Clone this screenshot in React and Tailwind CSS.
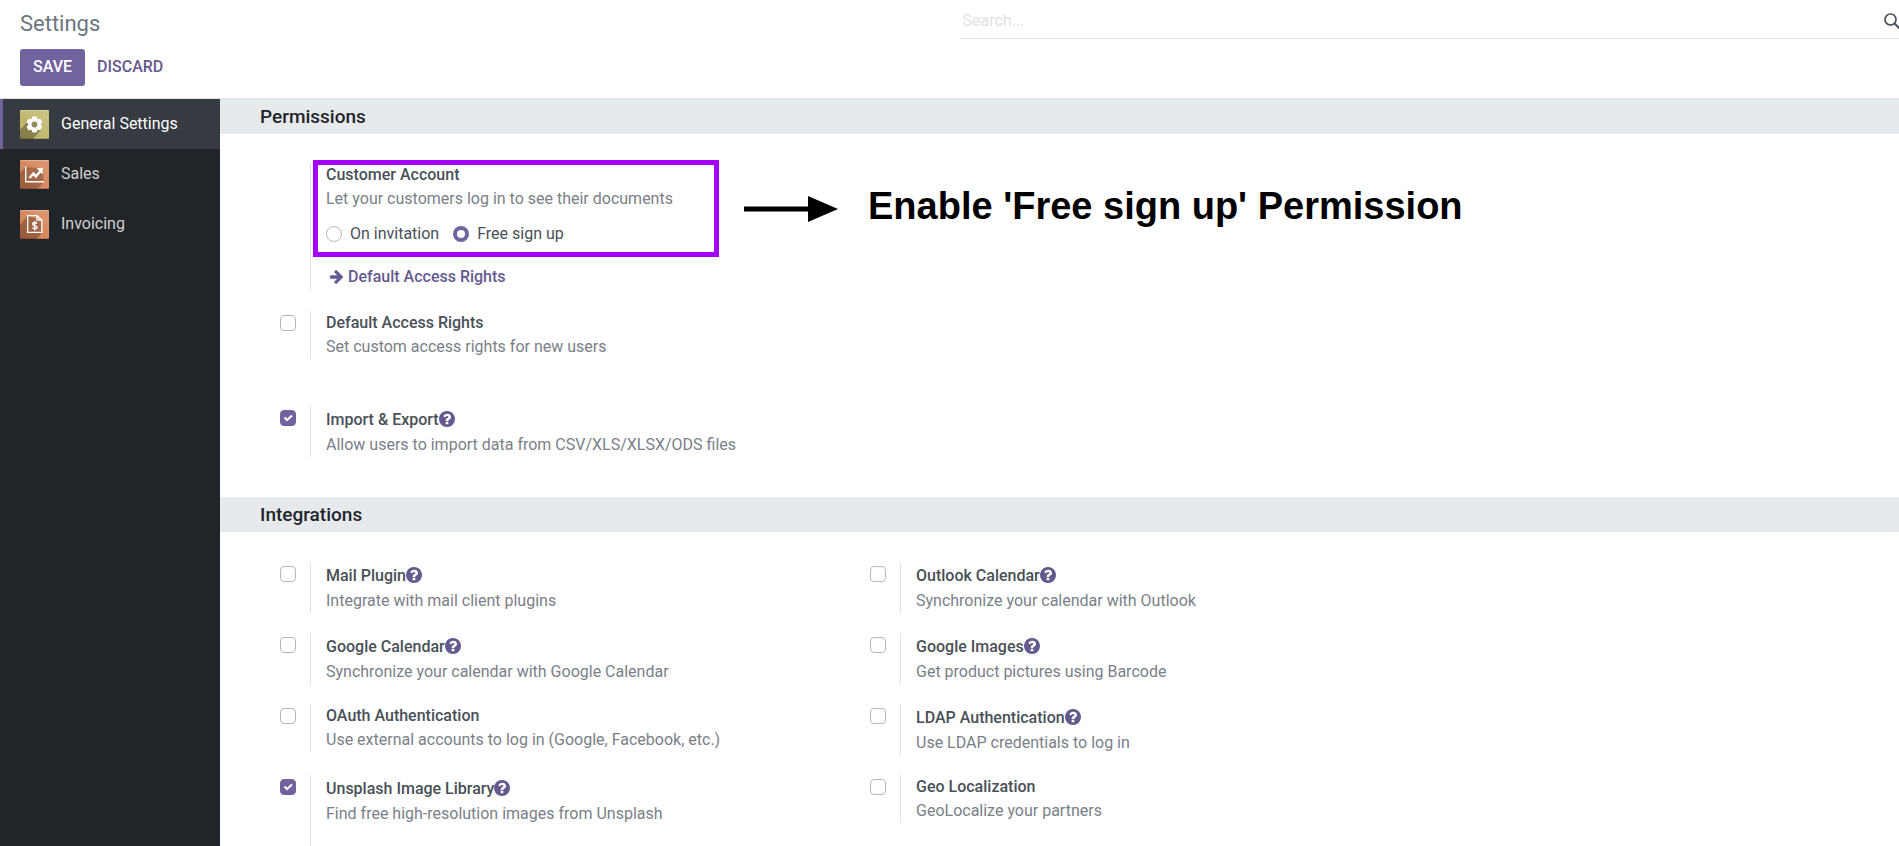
import { useState } from "react";

const permissions = [
  {
    id: "default-access",
    title: "Default Access Rights",
    text: "Set custom access rights for new users",
  },
];

const dataTools = [
  {
    id: "import-export",
    title: "Import & Export",
    text: "Allow users to import data from CSV/XLS/XLSX/ODS files",
    help: true,
    checked: true,
  },
];

const integrations = [
  {
    id: "mail-plugin",
    title: "Mail Plugin",
    text: "Integrate with mail client plugins",
    help: true,
  },
  {
    id: "outlook-calendar",
    title: "Outlook Calendar",
    text: "Synchronize your calendar with Outlook",
    help: true,
  },
  {
    id: "google-calendar",
    title: "Google Calendar",
    text: "Synchronize your calendar with Google Calendar",
    help: true,
  },
  {
    id: "google-images",
    title: "Google Images",
    text: "Get product pictures using Barcode",
    help: true,
  },
  {
    id: "oauth",
    title: "OAuth Authentication",
    text: "Use external accounts to log in (Google, Facebook, etc.)",
  },
  {
    id: "ldap",
    title: "LDAP Authentication",
    text: "Use LDAP credentials to log in",
    help: true,
  },
  {
    id: "unsplash",
    title: "Unsplash Image Library",
    text: "Find free high-resolution images from Unsplash",
    help: true,
    checked: true,
    extra: true,
  },
  {
    id: "geo",
    title: "Geo Localization",
    text: "GeoLocalize your partners",
  },
];

const AppTile = ({ id, from, to, children }) => (
  <svg viewBox="0 0 29 29" className="size-[29px] shrink-0 rounded-[1px]" aria-hidden="true">
    <defs>
      <linearGradient id={id} x1="1" y1="0" x2="0" y2="1">
        <stop offset="0" stopColor={from} />
        <stop offset="1" stopColor={to} />
      </linearGradient>
    </defs>
    <rect width="29" height="29" fill={`url(#${id})`} />
    {children}
    <path d="M0 .5h29" stroke="#fff" strokeOpacity=".3" />
    <path d="M0 28.5h29" stroke="#000" strokeOpacity=".15" />
  </svg>
);

const GearIcon = () => (
  <AppTile id="tile-gear" from="#cdc585" to="#b9ae62">
    <path d="M8 11 0 20v9h13l9-10z" fill="#000" fillOpacity=".28" />
    <g fill="#fff">
      <circle cx="14.5" cy="14.5" r="6.4" />
      <rect x="12" y="6.4" width="5" height="16.2" rx="1.4" />
      <rect x="12" y="6.4" width="5" height="16.2" rx="1.4" transform="rotate(60 14.5 14.5)" />
      <rect x="12" y="6.4" width="5" height="16.2" rx="1.4" transform="rotate(120 14.5 14.5)" />
    </g>
    <circle cx="14.5" cy="14.5" r="2.9" fill="#938b56" />
  </AppTile>
);

const ChartIcon = () => (
  <AppTile id="tile-chart" from="#dd9a74" to="#d1784a">
    <path d="M5.500 7 0 13v16h17.500l6-7L23 8.500z" fill="#000" fillOpacity=".24" />
    <path d="M5.700 6.500V21.700H24" fill="none" stroke="#fff" strokeWidth="1.400" />
    <path d="m9.500 18 4-4.500 2.300 3 4.700-5.500" fill="none" stroke="#fff" strokeWidth="2.400" />
    <path d="m16.500 8.300 6.500-.6-.5 6.500z" fill="#fff" />
  </AppTile>
);

const InvoiceIcon = () => (
  <AppTile id="tile-invoice" from="#dd9a74" to="#d1784a">
    <path d="M7.500 6 0 14.500V29h16.500l5.500-6.500V10z" fill="#000" fillOpacity=".26" />
    <path
      d="M7.700 5.700h9.300l4.800 4.300v12.300H7.700zM17 5.700V10h4.800"
      fill="none"
      stroke="#fff"
      strokeWidth="1.300"
    />
    <path
      d="M17 13.500c-.6-.8-1.400-1-2.300-1-1.200 0-2.100.6-2.100 1.500 0 2.300 4.500.9 4.500 3.300 0 1-1 1.600-2.300 1.600-1 0-1.900-.4-2.500-1.200M14.700 11v9.500"
      fill="none"
      stroke="#fff"
      strokeWidth="1.300"
    />
  </AppTile>
);

const ArrowRightIcon = () => (
  <svg viewBox="0 180 1472 1560" fill="currentColor" className="h-[14px] w-[13px]" aria-hidden="true">
    <path d="M1472 960q0 54-37 91l-651 651q-39 37-91 37-51 0-90-37l-75-75q-38-38-38-91t38-91l293-293H117q-52 0-84.500-37.500T0 1024V896q0-53 32.500-90.500T117 768h704L528 474q-38-36-38-90t38-90l75-75q38-38 90-38 53 0 91 38l651 651q37 35 37 90z" />
  </svg>
);

const HelpIcon = () => (
  <svg viewBox="0 128 1536 1536" fill="currentColor" className="size-4" aria-hidden="true">
    <path d="M896 1376v-192q0-14-9-23t-23-9H672q-14 0-23 9t-9 23v192q0 14 9 23t23 9h192q14 0 23-9t9-23zm256-672q0-88-55.500-163T958 425t-170-41q-243 0-371 213-15 24 8 42l132 100q7 6 19 6 16 0 25-12 53-68 86-92 34-24 86-24 48 0 85.500 26t37.500 59q0 38-20 61t-68 45q-63 28-115.500 86.500T640 1020v36q0 14 9 23t23 9h192q14 0 23-9t9-23q0-19 21.500-49.500T972 957q32-18 49-28.500t46-35 44.500-48 28-60.500 12.500-81zm384 192q0 209-103 385.500T1153.500 1561 768 1664t-385.500-103T103 1281.500 0 896t103-385.500T382.500 231 768 128t385.500 103T1433 510.500 1536 896z" />
  </svg>
);

const apps = [
  { name: "General Settings", Icon: GearIcon },
  { name: "Sales", Icon: ChartIcon },
  { name: "Invoicing", Icon: InvoiceIcon },
];

const Checkbox = ({ id, checked, onChange }) => (
  <span className="relative mt-1 size-4 shrink-0">
    <input
      id={id}
      type="checkbox"
      checked={checked}
      onChange={onChange}
      className="peer block size-4 appearance-none rounded-[4px] border border-[#b5b8bb] bg-white checked:border-[#71639e] checked:bg-[#71639e]"
    />
    <svg
      viewBox="0 0 16 16"
      className="pointer-events-none absolute inset-0 hidden size-4 peer-checked:block"
      aria-hidden="true"
    >
      <path d="m4.500 7.500 2.500 2.500 5-4.500" fill="none" stroke="#fff" strokeWidth="2" />
    </svg>
  </span>
);

const Setting = ({ id, title, text, help, checked: initial = false, extra }) => {
  const [checked, setChecked] = useState(initial);

  return (
    <div className="flex items-start pl-4">
      <Checkbox id={id} checked={checked} onChange={(e) => setChecked(e.target.checked)} />
      <div className={`ml-[14px] border-l border-[#dee2e6] pl-[15px] ${extra ? "pb-12" : ""}`}>
        <div className={`flex items-center ${help ? "h-[27px]" : "h-6"}`}>
          <label htmlFor={id} className="font-medium text-[#495057]">
            {title}
          </label>
          {help && (
            <a href="#" aria-label={`${title} documentation`} className="pb-px text-[#66598f]">
              <HelpIcon />
            </a>
          )}
        </div>
        <p className="text-[#7a8087]">{text}</p>
      </div>
    </div>
  );
};

const Radio = ({ value, label, selected, onSelect }) => (
  <label className="flex items-center gap-2">
    <input
      type="radio"
      name="signup"
      value={value}
      checked={selected}
      onChange={() => onSelect(value)}
      className="size-4 appearance-none rounded-full border border-[#b5b8bb] bg-white checked:border-[4px] checked:border-[#71639e]"
    />
    {label}
  </label>
);

const CustomerAccount = () => {
  const [signup, setSignup] = useState("free");

  return (
    <div className="relative ml-[46px] border-l border-[#dee2e6] pb-px pl-[15px]">
      <h3 className="font-medium text-[#495057]">Customer Account</h3>
      <p className="text-[#7a8087]">Let your customers log in to see their documents</p>
      <div className="mt-[11px] flex gap-[14px] text-[#495057]">
        <Radio
          value="invitation"
          label="On invitation"
          selected={signup === "invitation"}
          onSelect={setSignup}
        />
        <Radio value="free" label="Free sign up" selected={signup === "free"} onSelect={setSignup} />
      </div>
      <a href="#" className="mt-[19px] ml-1 flex items-center gap-[5px] font-medium text-[#66598f]">
        <ArrowRightIcon />
        Default Access Rights
      </a>

      {/* callout */}
      <div className="pointer-events-none absolute -top-[3px] left-0.5 flex h-[97px] items-center">
        <div className="h-full w-[406px] shrink-0 border-[5px] border-[#a600f8]" />
        <svg viewBox="0 0 94 26" className="ml-[25px] h-[26px] w-[94px] shrink-0" aria-hidden="true">
          <path d="M0 10.500h64V0l30 13-30 13V15.500H0z" />
        </svg>
        <p className="ml-[30px] pb-[6px] font-['Liberation_Sans',Arial,sans-serif] text-[38px] leading-none font-bold whitespace-nowrap text-black">
          Enable 'Free sign up' Permission
        </p>
      </div>
    </div>
  );
};

const SectionTitle = ({ children }) => (
  <h2 className="bg-[#e7eaed] pl-10 text-[19px] leading-[35px] font-medium text-[#212529]">
    {children}
  </h2>
);

const SettingGrid = ({ items }) => (
  <div className="grid max-w-[1180px] grid-cols-2 items-start gap-y-5">
    {items.map((item) => (
      <Setting key={item.id} {...item} />
    ))}
  </div>
);

export default function App() {
  const [active, setActive] = useState("General Settings");

  return (
    <div className="flex h-screen flex-col overflow-hidden bg-white font-[Roboto,sans-serif] text-base leading-6">
      <header className="flex border-b border-[#dee2e6]">
        <div className="w-1/2 pt-2 pb-3 pl-5">
          <h1 className="text-[22px] leading-8 text-[#6c757d]">Settings</h1>
          <div className="mt-[9px] flex">
            <button
              type="button"
              className="h-[37px] rounded-[3px] bg-[#71639e] px-[13px] pb-0.5 font-medium text-white uppercase"
            >
              Save
            </button>
            <button type="button" className="h-[37px] px-3 pb-0.5 font-medium text-[#66598f] uppercase">
              Discard
            </button>
          </div>
        </div>
        <div className="w-1/2 pl-[10px]">
          <div className="flex h-[39px] items-center border-b border-[#dee2e6] pt-[3px]">
            <input
              type="search"
              aria-label="Search"
              placeholder="Search..."
              className="min-w-0 flex-1 pl-[3px] outline-none placeholder:text-[#dee2e6]"
            />
            <svg viewBox="0 0 15 16" className="h-4 w-[15px] shrink-0" aria-hidden="true">
              <circle cx="6.500" cy="6.500" r="5.500" fill="none" stroke="#495057" strokeWidth="1.700" />
              <path d="m10.500 10.500 5 5" stroke="#495057" strokeWidth="2" />
            </svg>
          </div>
        </div>
      </header>

      <div className="flex min-h-0 flex-1">
        <nav className="w-[220px] shrink-0 bg-[#212529]">
          {apps.map(({ name, Icon }) => (
            <button
              key={name}
              type="button"
              onClick={() => setActive(name)}
              className={`flex h-[50px] w-full items-center gap-3 border-l-[3px] pl-[17px] ${
                active === name
                  ? "border-[#71639e] bg-[#363a41] text-white"
                  : "border-transparent text-[#ced0d2]"
              }`}
            >
              <Icon />
              {name}
            </button>
          ))}
        </nav>

        <main className="min-w-0 flex-1 overflow-hidden">
          <SectionTitle>Permissions</SectionTitle>
          <div className="px-11 pt-[29px] pb-10">
            <div className="max-w-[590px]">
              <CustomerAccount />
            </div>
            <div className="mt-[21px]">
              <SettingGrid items={permissions} />
            </div>
            <div className="mt-[47px]">
              <SettingGrid items={dataTools} />
            </div>
          </div>
          <SectionTitle>Integrations</SectionTitle>
          <div className="px-11 pt-[30px]">
            <SettingGrid items={integrations} />
          </div>
        </main>
      </div>
    </div>
  );
}
